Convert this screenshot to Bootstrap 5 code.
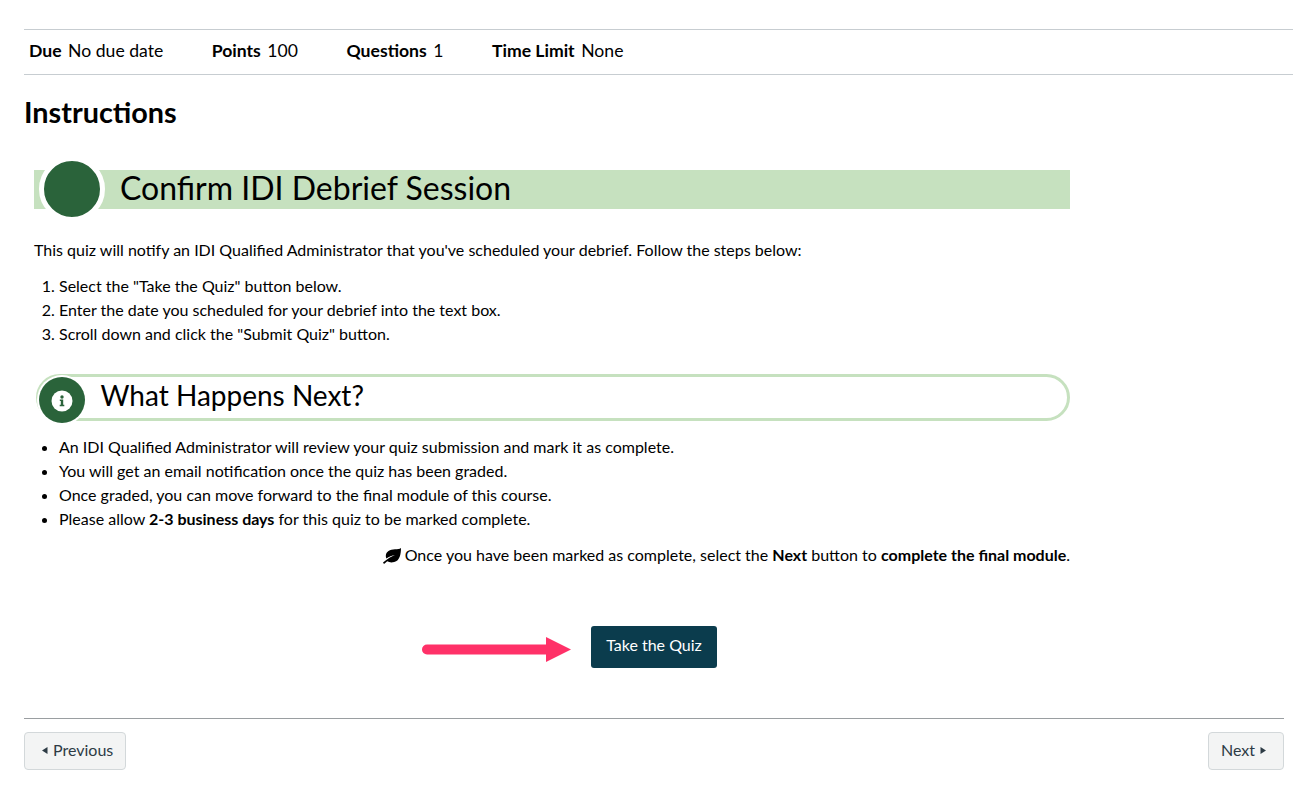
<!doctype html>
<html lang="en"><head><meta charset="utf-8"><title>Quiz</title>
<link href="https://cdn.jsdelivr.net/npm/bootstrap@5.3.0/dist/css/bootstrap.min.css" rel="stylesheet">
<style>
body{font-family:Lato,"Liberation Sans",sans-serif;color:#000;font-size:16px;line-height:24px;background:#fff;}
.pg{padding:29px 4px 0 24px;height:797px;overflow:hidden}
.facts{border-top:1px solid #c7cdd1;border-bottom:1px solid #c7cdd1;height:46px;font-size:17.6px;column-gap:48.5px;padding-left:5px;padding-bottom:2px}
.facts b{font-weight:700;margin-right:6.5px}
h2.ttl{font-size:28.8px;font-weight:700;line-height:34px;margin:20px 0 0;}
.body-w{width:1036px;margin-left:10px}
.hero{height:39px;background:#c6e1bf;margin-top:41px;position:relative;padding-left:86px;font-size:32px;line-height:35px;}
.hero-dot{position:absolute;left:5px;top:-14px;width:66px;height:66px;border-radius:50%;background:#2a633a;border:5px solid #fff}
.tx{font-size:16px;line-height:24px}
.intro{margin:29px 0 0}
.tx ol,.tx ul{padding-left:25px;margin:0}
.steps{margin-top:12px!important}
.pill{height:47px;border:3px solid #c6e1bf;border-radius:24px;margin-top:28px;margin-left:2px;padding-left:61.500px;font-size:28px;line-height:36px;position:relative}
.pill-dot{position:absolute;left:0;top:0;width:46px;height:46px;border-radius:50%;background:#2a633a;display:flex;align-items:center;justify-content:center;box-shadow:0 0 0 2px #fff}
.pts{margin-top:14px!important}
.fin{text-align:right;margin-top:12px}
.quiz-row{margin-top:59px;height:42px;padding-left:388px;gap:19px}
.btn-q{background:#0b3c4d;border:0;color:#fff;font-size:16px;width:126px;height:42px;border-radius:3px;padding:0 0 4px}
.btn-q:hover{background:#0b3c4d;color:#fff}
.foot{width:1260px;border-top:1px solid #9a9ea1;margin-top:50px;padding-top:13px}
.btn-n{background:#f3f4f4;border:1px solid #d3d8da;color:#2d3b45;height:38px;border-radius:4px;font-size:16px;display:flex;align-items:center;gap:5px}
.btn-pv{padding:0 12px 2px 17px}
.btn-nx{padding:0 17px 2px 12px}
</style></head><body>
<div class="pg">
<div class="facts d-flex align-items-center">
<div><b>Due</b>No due date</div><div><b>Points</b>100</div><div><b>Questions</b>1</div><div><b>Time Limit</b>None</div>
</div>
<h2 class="ttl">Instructions</h2>
<div class="body-w">
<div class="hero"><span class="hero-dot"></span>Confirm IDI Debrief Session</div>
<div class="tx">
<p class="intro">This quiz will notify an IDI Qualified Administrator that you've scheduled your debrief. Follow the steps below:</p>
<ol class="steps"><li>Select the "Take the Quiz" button below.</li><li>Enter the date you scheduled for your debrief into the text box.</li><li>Scroll down and click the "Submit Quiz" button.</li></ol>
<div class="pill"><span class="pill-dot"><svg width="22" height="24" viewBox="0 0 22 24"><circle cx="11" cy="13" r="10.500" fill="#fff"/><circle cx="11" cy="9" r="1.700" fill="#2a633a"/><path d="M8.800 11.600h3.400v5.100h1.100v1.500H8.700v-1.500h1.100v-3.600h-1z" fill="#2a633a"/></svg></span>What Happens Next?</div>
<ul class="pts"><li>An IDI Qualified Administrator will review your quiz submission and mark it as complete.</li><li>You will get an email notification once the quiz has been graded.</li><li>Once graded, you can move forward to the final module of this course.</li><li>Please allow <b>2-3 business days</b> for this quiz to be marked complete.</li></ul>
<p class="fin mb-0"><svg width="18" height="16" viewBox="0 0 18 16" style="vertical-align:-3px"><path d="M18 0c-1.500 1.200-3.500 1.200-6 1.300C7 1.600 2.800 3.500 2.800 8c0 1 .2 1.800.6 2.600C6 8.600 9 7.500 12 7c-3.500 1.300-7.500 3.700-12 7.500l1 1.500c1-.8 2-1.800 3.200-2.700 2 1.100 4.300 1.400 7 .7C17 12.800 17.900 6 18 0z" fill="#000"/></svg> Once you have been marked as complete, select the <b>Next</b> button to <b>complete the final module</b>.</p>
</div>
<div class="quiz-row d-flex align-items-center">
<svg width="150" height="30" viewBox="0 0 150 30"><path d="M5 17.500H126" stroke="#ff3168" stroke-width="10" stroke-linecap="round"/><path d="M124 5l25 12.500-25 12.500z" fill="#ff3168"/></svg>
<button class="btn btn-q">Take the Quiz</button>
</div>
</div>
<div class="foot d-flex justify-content-between">
<button class="btn-n btn-pv"><svg width="6" height="7" viewBox="0 0 6 7"><path d="M5.500 0v7L0 3.500z" fill="#2d3b45"/></svg>Previous</button>
<button class="btn-n btn-nx">Next<svg width="6" height="7" viewBox="0 0 6 7"><path d="M.5 0v7L6 3.500z" fill="#2d3b45"/></svg></button>
</div>
</div>
<script src="https://cdn.jsdelivr.net/npm/bootstrap@5.3.0/dist/js/bootstrap.bundle.min.js"></script>
</body></html>
